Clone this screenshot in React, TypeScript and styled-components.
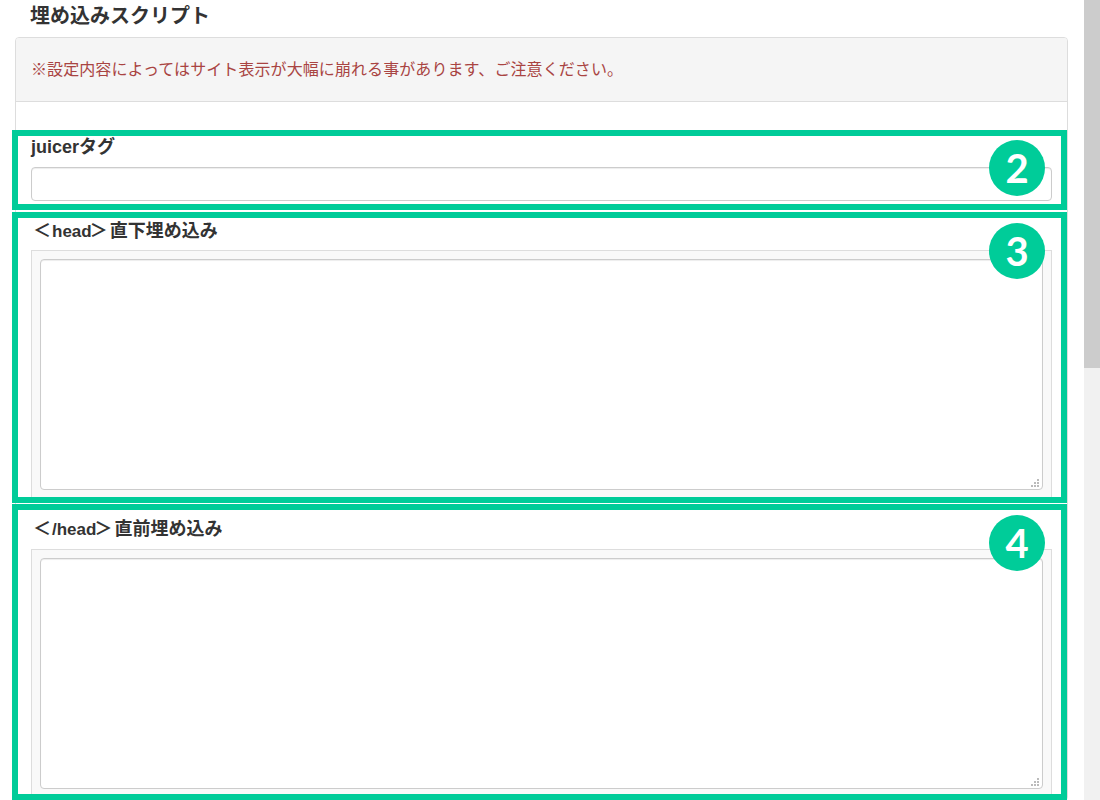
import React from 'react';
import styled, { createGlobalStyle } from 'styled-components';

const GlobalStyle = createGlobalStyle`
  html, body {
    margin: 0;
    padding: 0;
    height: 100%;
    overflow: hidden;
    background: #fff;
  }
`

const Shell = styled.div`
  height: 800px;
  display: flex;
  overflow: hidden;
  color: #333;
  font-family: "Liberation Sans", "Noto Sans CJK JP", sans-serif;
`

const Page = styled.main`
  flex: 1;
  min-width: 0;
  box-sizing: border-box;
  padding: 0 16px 0 15px;
`

const ScrollTrack = styled.div`
  width: 16px;
  flex: none;
  background: #f1f1f1;
`

const ScrollThumb = styled.div`
  height: 368px;
  background: #ccc;
`

const Heading = styled.h2`
  margin: 0;
  height: 37px;
  padding: 6px 0 0 15px;
  box-sizing: border-box;
  font-size: 20px;
  line-height: 20px;
  font-weight: 700;
`

const Panel = styled.div`
  border: 1px solid #ddd;
  border-radius: 4px;
`

const PanelHead = styled.div`
  height: 59px;
  padding: 0 0 4px 15px;
  display: flex;
  align-items: center;
  background: #f5f5f5;
  border-bottom: 1px solid #ddd;
  border-radius: 3px 3px 0 0;
  font-size: 16px;
  letter-spacing: .08px;
  color: #a94442;
`

const PanelBody = styled.div`
  padding-top: 28px;
`

const Section = styled.section<{ $height: number; $gap: number; $top: number }>`
  position: relative;
  box-sizing: border-box;
  height: ${p => p.$height}px;
  margin: ${p => p.$gap}px 0 0 -4px;
  padding: ${p => p.$top}px 9px 0 13px;
  border: 6px solid #00cc99;
  overflow: hidden;
  background: #fff;
`

const Label = styled.label<{ $gap: number; $indent?: number }>`
  display: block;
  height: 20px;
  margin-bottom: ${p => p.$gap}px;
  padding-left: ${p => p.$indent ?? 0}px;
  font-size: 18px;
  line-height: 20px;
  font-weight: 700;
  word-spacing: -3px;
`

const TagName = styled.span`
  margin: 0 -2px 0 1px;
  font-size: 17px;
  line-height: 1;
`

const TextInput = styled.input`
  display: block;
  width: 100%;
  height: 34px;
  box-sizing: border-box;
  border: 1px solid #ccc;
  border-radius: 4px;
  box-shadow: inset 0 1px 1px rgba(0, 0, 0, .075);
  background: #fff;
`

const Well = styled.div`
  padding: 8px;
  background: #f9f9f9;
  border: 1px solid #ddd;
`

const AreaBox = styled.div`
  position: relative;
`

const ScriptArea = styled.textarea`
  display: block;
  width: 100%;
  height: 231px;
  box-sizing: border-box;
  border: 1px solid #ccc;
  border-radius: 4px;
  box-shadow: inset 0 1px 1px rgba(0, 0, 0, .075);
  background: #fff;
  resize: none;
`

const Grip = styled.svg`
  position: absolute;
  right: 4px;
  bottom: 3px;
  width: 8px;
  height: 8px;
  fill: #bbb;
`

const Badge = styled.div<{ $top: number }>`
  position: absolute;
  top: ${p => p.$top}px;
  right: 16px;
  width: 56px;
  height: 56px;
  border-radius: 50%;
  display: flex;
  align-items: center;
  justify-content: center;
  background: #00cc99;
  color: #fff;
  font-family: Lato, sans-serif;
  font-size: 40px;
  font-weight: 700;
  line-height: 56px;
`

const ResizeGrip: React.FC = () => (
  <Grip viewBox="0 0 8 8">
    <rect x="6" y="0" width="2" height="2" />
    <rect x="3" y="3" width="2" height="2" />
    <rect x="6" y="3" width="2" height="2" />
    <rect x="0" y="6" width="2" height="2" />
    <rect x="3" y="6" width="2" height="2" />
    <rect x="6" y="6" width="2" height="2" />
  </Grip>
);

const App: React.FC = () => {
  return (
    <Shell>
      <GlobalStyle />
      <Page>
        <Heading>埋め込みスクリプト</Heading>
        <Panel>
          <PanelHead>※設定内容によってはサイト表示が大幅に崩れる事があります、ご注意ください。</PanelHead>
          <PanelBody>
            <Section $height={80} $gap={0} $top={1}>
              <Label $gap={10}>juicerタグ</Label>
              <TextInput type="text" />
              <Badge $top={4}>2</Badge>
            </Section>
            <Section $height={291} $gap={2} $top={3}>
              <Label $gap={9} $indent={2}>＜<TagName>head</TagName>＞ 直下埋め込み</Label>
              <Well>
                <AreaBox>
                  <ScriptArea />
                  <ResizeGrip />
                </AreaBox>
              </Well>
              <Badge $top={5}>3</Badge>
            </Section>
            <Section $height={296} $gap={1} $top={9}>
              <Label $gap={10} $indent={2}>＜<TagName>/head</TagName>＞ 直前埋め込み</Label>
              <Well>
                <AreaBox>
                  <ScriptArea />
                  <ResizeGrip />
                </AreaBox>
              </Well>
              <Badge $top={5}>4</Badge>
            </Section>
          </PanelBody>
        </Panel>
      </Page>
      <ScrollTrack>
        <ScrollThumb />
      </ScrollTrack>
    </Shell>
  );
}
export default App;
